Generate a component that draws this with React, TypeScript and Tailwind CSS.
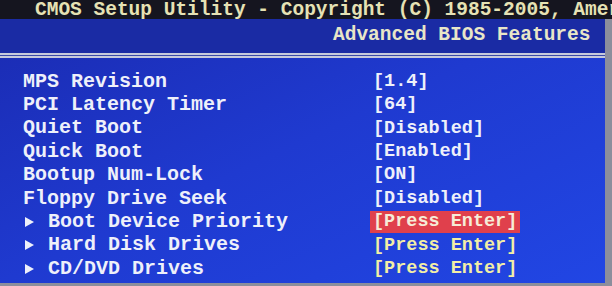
import React from 'react';

type Row = { label: string; value: string; sub?: boolean; active?: boolean };

const rows: Row[] = [
  { label: 'MPS Revision', value: '[1.4]' },
  { label: 'PCI Latency Timer', value: '[64]' },
  { label: 'Quiet Boot', value: '[Disabled]' },
  { label: 'Quick Boot', value: '[Enabled]' },
  { label: 'Bootup Num-Lock', value: '[ON]' },
  { label: 'Floppy Drive Seek', value: '[Disabled]' },
  { label: 'Boot Device Priority', value: '[Press Enter]', sub: true, active: true },
  { label: 'Hard Disk Drives', value: '[Press Enter]', sub: true },
  { label: 'CD/DVD Drives', value: '[Press Enter]', sub: true },
];

const Arrow = () => (
  <svg width="9" height="10" viewBox="0 0 9 10" className="mr-[14px] ml-[2px]">
    <path d="M0 0 L9 5 L0 10 Z" fill="#eef0fa" />
  </svg>
);

export default function App() {
  return (
    <div
      className="w-[612px] h-[286px] bg-[#8c8e9c] overflow-hidden"
      style={{ fontFamily: '"Liberation Mono", "DejaVu Sans Mono", monospace' }}
    >
      <div className="w-[605px] h-[283px] flex flex-col bg-gradient-to-br from-[#1a2ab0] via-[#1f3ad0] to-[#2146e4] font-bold">
        {/* title strip */}
        <div className="h-[19px] w-[612px] bg-[#15151f] pl-[35px] pt-[1px] text-[19.5px] leading-[18px] text-[#e6e2b4] whitespace-nowrap overflow-hidden">
          CMOS Setup Utility - Copyright (C) 1985-2005, American Megatrends, Inc.
        </div>
        <div className="h-[33px] bg-[#1a2ba4] flex items-center pl-[333px] text-[19.5px] text-[#e8e6c8] whitespace-nowrap">
          Advanced BIOS Features
        </div>
        <div className="h-[1px] bg-[#1a2ba4]" />
        <div className="h-[2px] bg-[#c6cadc]" />
        <div className="h-[1px] bg-[#3a4aa8]" />
        <div className="h-[2px] bg-[#c6cadc]" />

        {/* settings */}
        <div className="flex flex-col pt-[12px] text-[20px] text-[#eef0fa]">
          {rows.map((r) => (
            <div key={r.label} className="h-[23.4px] flex items-center whitespace-nowrap">
              <div className="w-[370px] pl-[23px] flex items-center">
                {r.sub && <Arrow />}
                <span>{r.label}</span>
              </div>
              <span
                className={
                  'text-[18.5px] px-[3px] ' +
                  (r.active
                    ? 'bg-[#e0404c] text-[#f6ecd8] h-[22px] flex items-center'
                    : r.sub
                    ? 'text-[#f2eea6]'
                    : '')
                }
              >
                {r.value}
              </span>
            </div>
          ))}
        </div>
      </div>
    </div>
  );
}
